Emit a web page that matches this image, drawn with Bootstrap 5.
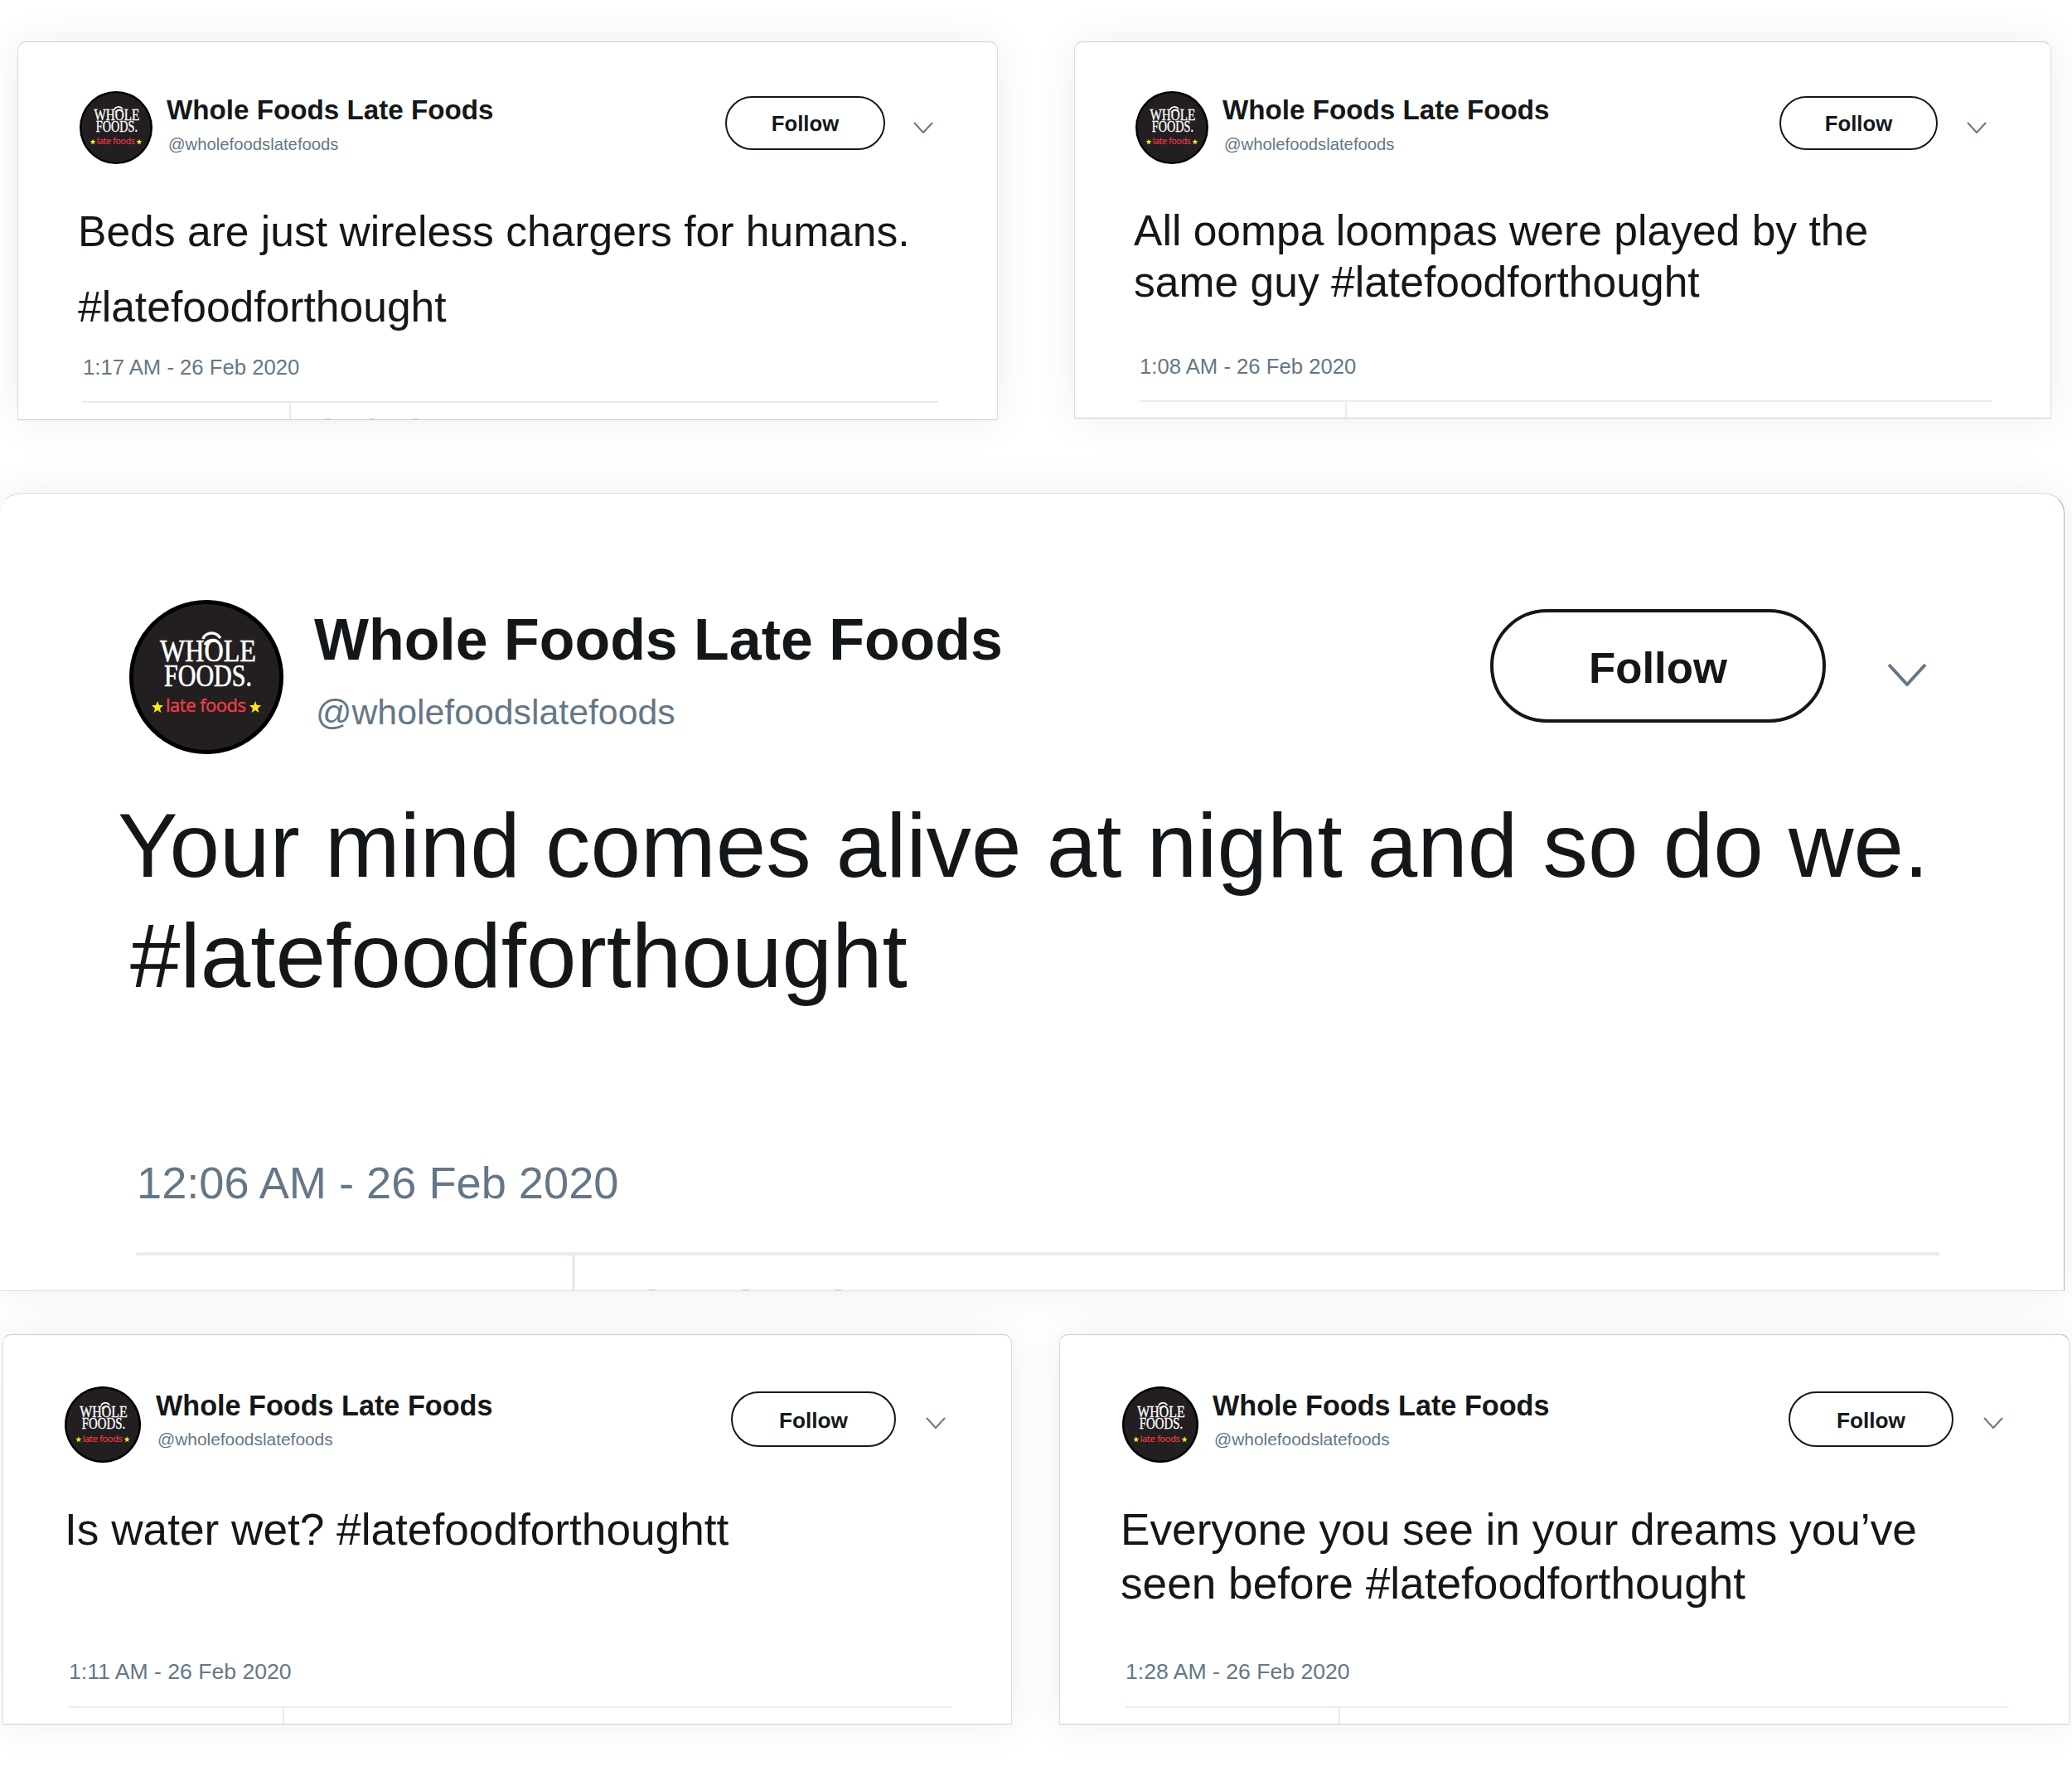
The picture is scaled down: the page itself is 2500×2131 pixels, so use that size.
<!doctype html>
<html lang="en">
<head>
<meta charset="utf-8">
<title>Whole Foods Late Foods</title>
<link href="https://cdn.jsdelivr.net/npm/bootstrap@5.3.0/dist/css/bootstrap.min.css" rel="stylesheet">
<style>
body{background:#fff;margin:0;width:2500px;height:2131px;overflow:hidden;font-family:"Liberation Sans",Arial,sans-serif;color:#14171a}
.wall{display:flex;flex-direction:column}
.row-one{display:flex;padding:50px 0 0 21px;gap:92px;align-items:flex-start}
.row-two{display:flex;padding:88px 0 0 0}
.row-three{display:flex;padding:52px 0 0 3px;gap:57px}
.tw{position:relative;flex:none;width:var(--w);height:var(--h);border:1px solid #d8dde0;border-top-color:#c9cccf;border-bottom-color:#cdcdcd;border-radius:var(--r) var(--r) 0 0;background:#fff;overflow:hidden;box-shadow:0 0 50px rgba(0,0,0,.075);padding:var(--pt) 0 0 0}
.tw>*{flex:none}
.tw-head{height:var(--av);margin-left:var(--al);margin-bottom:var(--mb);align-items:flex-start}
.tw-av{width:var(--av);height:var(--av);flex:none;display:block}
.tw-id{margin-left:var(--ig);margin-top:var(--it);flex:1 1 auto;min-width:0}
.tw-name{font-weight:700;font-size:var(--nf);line-height:var(--nl);color:#14171a;white-space:nowrap}
.tw-handle{font-size:var(--hf);line-height:var(--hl);color:#657786;white-space:nowrap;margin-left:var(--hi)}
.tw-follow{flex:none;width:var(--bw);height:var(--bh);margin-top:var(--bt);margin-right:var(--bg);padding:var(--bp) 0 0;border:var(--bb) solid #14171a;background:#fff;color:#14171a;font-weight:700;font-size:var(--bf);line-height:1;font-family:inherit;--bs-btn-hover-bg:#fff}
.tw-chev{flex:none;display:block;width:var(--cw);height:var(--ch);margin-top:var(--ct);margin-right:var(--cr);fill:none;stroke:#657786;stroke-width:2}
.tw-text{margin:0;height:var(--th);font-size:var(--tf);line-height:var(--tl);color:#14171a;padding-left:var(--tx);text-indent:var(--ti);white-space:nowrap}
.tw-time{margin:var(--dm) 0 0 var(--dx);font-size:var(--df);line-height:var(--dl);color:#657786;white-space:nowrap}
.tw-rule{margin:var(--rm) 0 0 var(--rx);width:var(--rw);height:var(--rh);background:#e6ecf0}
.tw-stub{margin-left:var(--sx);width:var(--rh);height:60px;background:#e6ecf0}
.corner-tick{position:absolute;top:-1px;right:-1px;width:12px;height:12px;background:radial-gradient(circle at 0 100%,transparent 11px,#1da1f2 12px)}
.corner-arc{position:absolute;top:-1px;width:26px;height:26px;border-top:1px solid #9ccbea}
.arc-left{left:-1px;border-left:1px solid #9ccbea;border-top-left-radius:24px}
.arc-right{right:-1px;border-right:1px solid #9ccbea;border-top-right-radius:24px}
.tips{position:absolute;left:var(--px);bottom:0;gap:var(--pg)}
.tips span{display:block;width:var(--pw);height:1px;background:#c8c8c8;border-radius:50%}

.tw-small{--r:10px;--av:88px;--nf:33.2px;--nl:46px;--hf:20.3px;--hl:36px;--bf:25.7px;--bb:2.5px;--bp:3px;--bh:65px;--rh:2px;--tf:51.6px;--df:25.7px;--dl:40px;--cw:24px;--ch:14px;--ct:37px}
.tw-low{--av:92px;--nf:34.2px;--hf:20.9px;--bf:26.2px;--bh:67px;--df:26.6px;--tf:53.2px;--tl:64.5px;--th:130px;--pt:62px;--mb:49px;--dm:53px;--rm:22px;--h:471px}

.c-one{--w:1183px;--h:457px;--pt:59px;--al:74px;--ig:17px;--it:0px;--hi:2px;--bw:193px;--bt:6px;--bg:34px;--cr:77px;--mb:36px;--tl:91px;--th:182px;--tx:72px;--ti:0px;--dm:7px;--dx:78px;--rm:21px;--rx:77px;--rw:1033px;--sx:327px;--px:369px;--pg:44px;--pw:9px}
.c-two{--w:1179px;--h:455px;--pt:59px;--al:73px;--ig:17px;--it:0px;--hi:2px;--bw:191px;--bt:6px;--bg:35px;--cr:77px;--mb:49px;--tl:62px;--th:124px;--tx:71px;--ti:0px;--dm:50.5px;--dx:78px;--rm:21px;--rx:78px;--rw:1028px;--sx:326px}
.c-big{--w:2491px;--h:963px;--r:24px;--pt:128px;--al:155px;--av:186px;--ig:37px;--it:1px;--nf:69.9px;--nl:94px;--hf:42.8px;--hl:80px;--hi:2px;--bw:405px;--bh:137px;--bt:11px;--bb:4px;--bp:6px;--bf:52.7px;--bg:74px;--cw:48px;--ch:28px;--ct:76px;--cr:165px;--mb:44px;--tf:108.8px;--tl:133px;--th:268px;--tx:156px;--ti:-15px;--dm:170px;--dx:164px;--df:54.2px;--dl:70px;--rm:49px;--rx:163px;--rw:2176px;--rh:4px;--sx:689px;--px:781px;--pg:101px;--pw:11px;border-left-color:transparent;border-top-color:#e2e2e2;border-bottom-color:#e0e0e0;border-right-color:#a7b6c1}
.c-four{--w:1218px;--r:10px;--al:74px;--ig:18px;--it:0px;--hi:2px;--bw:199px;--bt:6px;--bg:36px;--cr:79px;--ct:37px;--tx:74px;--ti:0px;--dx:79px;--rx:79px;--rw:1065px;--sx:337px}
.c-five{--w:1219px;--r:10px;--al:75px;--ig:17px;--it:0px;--hi:2px;--bw:199px;--bt:6px;--bg:36px;--cr:79px;--ct:37px;--tx:73px;--ti:0px;--dx:79px;--rx:79px;--rw:1065px;--sx:336px}
.logo-serif{font-family:"Liberation Serif",serif;font-size:38px;fill:#fff;stroke:#fff;stroke-width:.7px}
.logo-late{font-family:"Open Sans",sans-serif;font-size:22px;fill:#ee3e48;stroke:#ee3e48;stroke-width:.4px}
</style>
</head>
<body>
<svg width="0" height="0" class="d-block" aria-hidden="true">
  <defs>
    <symbol id="logo" viewBox="0 0 186 186">
      <circle cx="93" cy="93" r="93" fill="#000"/>
      <circle cx="93" cy="93" r="88" fill="#231f20"/>
      <path d="M89 47c2-7 14-11 21-1M91 54c4-6 13-8 17-2" fill="none" stroke="#fff" stroke-width="3.4"/>
      <text class="logo-serif" x="95" y="74" text-anchor="middle" textLength="116" lengthAdjust="spacingAndGlyphs">WHOLE</text>
      <text class="logo-serif" x="95" y="104" text-anchor="middle" textLength="106" lengthAdjust="spacingAndGlyphs">FOODS.</text>
      <text class="logo-late" x="92.5" y="135" text-anchor="middle" textLength="97">late foods</text>
      <polygon points="34,122 36,127 41,127 37,131 38.500,136 34,133 29.500,136 31,131 27,127 32,127" fill="#ffe81a"/>
      <polygon points="152,122 154,127 159,127 155,131 156.500,136 152,133 147.500,136 149,131 145,127 150,127" fill="#ffe81a"/>
    </symbol>
  </defs>
</svg>
<main class="wall">
  <div class="row-one">
    <article class="card tw tw-small c-one">
      <div class="d-flex tw-head">
        <svg class="tw-av"><use href="#logo"/></svg>
        <div class="tw-id"><div class="tw-name">Whole Foods Late Foods</div><div class="tw-handle">@wholefoodslatefoods</div></div>
        <button class="btn rounded-pill tw-follow" type="button">Follow</button>
        <svg class="tw-chev" viewBox="0 0 24 14"><path d="M1 1l11 12L23 1"/></svg>
      </div>
      <p class="tw-text">Beds are just wireless chargers for humans.<br>#latefoodforthought</p>
      <div class="tw-time">1:17 AM - 26 Feb 2020</div>
      <div class="tw-rule"></div><div class="tw-stub"></div>
      <div class="tips d-flex"><span></span><span></span><span></span></div>
    </article>
    <article class="card tw tw-small c-two">
      <div class="d-flex tw-head">
        <svg class="tw-av"><use href="#logo"/></svg>
        <div class="tw-id"><div class="tw-name">Whole Foods Late Foods</div><div class="tw-handle">@wholefoodslatefoods</div></div>
        <button class="btn rounded-pill tw-follow" type="button">Follow</button>
        <svg class="tw-chev" viewBox="0 0 24 14"><path d="M1 1l11 12L23 1"/></svg>
      </div>
      <p class="tw-text">All oompa loompas were played by the<br>same guy #latefoodforthought</p>
      <div class="tw-time">1:08 AM - 26 Feb 2020</div>
      <div class="tw-rule"></div><div class="tw-stub"></div>
    </article>
  </div>
  <div class="row-two">
    <article class="card tw c-big">
      <span class="corner-arc arc-left"></span><span class="corner-arc arc-right"></span>
      <div class="d-flex tw-head">
        <svg class="tw-av"><use href="#logo"/></svg>
        <div class="tw-id"><div class="tw-name">Whole Foods Late Foods</div><div class="tw-handle">@wholefoodslatefoods</div></div>
        <button class="btn rounded-pill tw-follow" type="button">Follow</button>
        <svg class="tw-chev" viewBox="0 0 48 28"><path d="M2 2l22 24L46 2" stroke-width="4"/></svg>
      </div>
      <p class="tw-text">Your mind comes alive at night and so do we.<br>#latefoodforthought</p>
      <div class="tw-time">12:06 AM - 26 Feb 2020</div>
      <div class="tw-rule"></div><div class="tw-stub"></div>
      <div class="tips d-flex"><span></span><span></span><span></span></div>
    </article>
  </div>
  <div class="row-three">
    <article class="card tw tw-small tw-low c-four">
      <div class="d-flex tw-head">
        <svg class="tw-av"><use href="#logo"/></svg>
        <div class="tw-id"><div class="tw-name">Whole Foods Late Foods</div><div class="tw-handle">@wholefoodslatefoods</div></div>
        <button class="btn rounded-pill tw-follow" type="button">Follow</button>
        <svg class="tw-chev" viewBox="0 0 24 14"><path d="M1 1l11 12L23 1"/></svg>
      </div>
      <p class="tw-text">Is water wet? #latefoodforthoughtt</p>
      <div class="tw-time">1:11 AM - 26 Feb 2020</div>
      <div class="tw-rule"></div><div class="tw-stub"></div>
    </article>
    <article class="card tw tw-small tw-low c-five">
      <span class="corner-tick"></span>
      <div class="d-flex tw-head">
        <svg class="tw-av"><use href="#logo"/></svg>
        <div class="tw-id"><div class="tw-name">Whole Foods Late Foods</div><div class="tw-handle">@wholefoodslatefoods</div></div>
        <button class="btn rounded-pill tw-follow" type="button">Follow</button>
        <svg class="tw-chev" viewBox="0 0 24 14"><path d="M1 1l11 12L23 1"/></svg>
      </div>
      <p class="tw-text">Everyone you see in your dreams you’ve<br>seen before #latefoodforthought</p>
      <div class="tw-time">1:28 AM - 26 Feb 2020</div>
      <div class="tw-rule"></div><div class="tw-stub"></div>
    </article>
  </div>
</main>
<script src="https://cdn.jsdelivr.net/npm/bootstrap@5.3.0/dist/js/bootstrap.bundle.min.js"></script>
</body>
</html>
